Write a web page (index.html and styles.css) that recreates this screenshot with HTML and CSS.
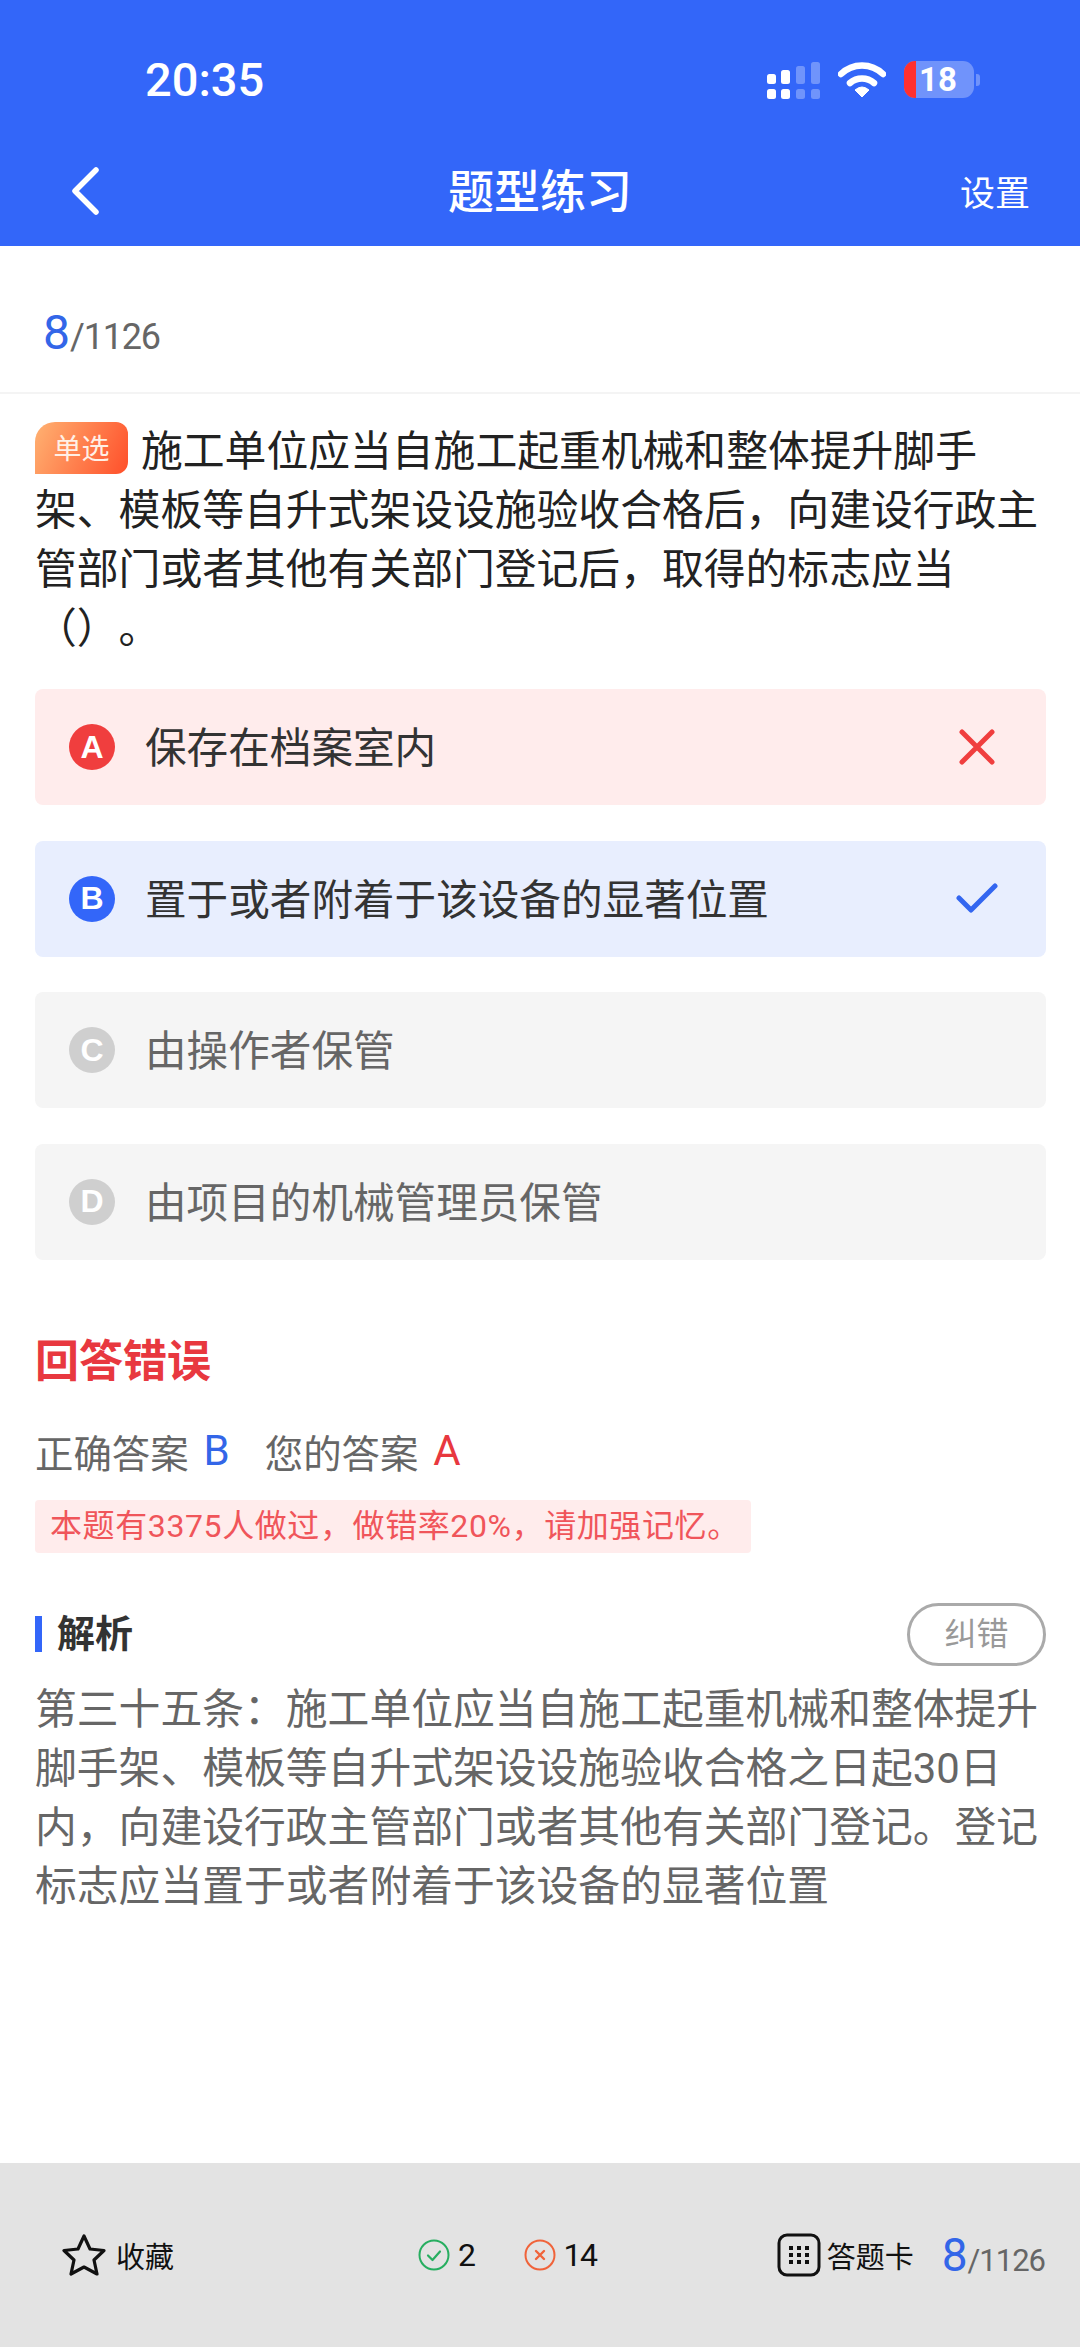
FILE: index.html
```html
<!DOCTYPE html>
<html lang="zh-CN">

<head>
    <meta charset="UTF-8">
    <meta name="viewport" content="width=device-width, initial-scale=1.0">
    <title>题型练习</title>
    <link rel="stylesheet" href="styles.css">
</head>

<body>
    <div class="page">
        <header class="top">
            <div class="status">
                <span class="time">20:35</span>
                <div class="status-icons">
                    <svg class="signal" width="54" height="38" viewBox="0 0 54 38">
                        <rect x="1" y="13" width="9" height="10" rx="2.5" fill="#fff"/>
                        <rect x="15" y="9" width="9" height="14" rx="2.5" fill="#fff"/>
                        <rect x="30" y="5" width="9" height="18" rx="2.5" fill="#fff" opacity=".3"/>
                        <rect x="45" y="1" width="9" height="22" rx="2.5" fill="#fff" opacity=".3"/>
                        <rect x="1" y="28" width="9" height="10" rx="2.5" fill="#fff"/>
                        <rect x="15" y="28" width="9" height="10" rx="2.5" fill="#fff"/>
                        <rect x="30" y="28" width="9" height="10" rx="2.5" fill="#fff" opacity=".3"/>
                        <rect x="45" y="28" width="9" height="10" rx="2.5" fill="#fff" opacity=".3"/>
                    </svg>
                    <svg class="wifi" width="48" height="36" viewBox="0 0 48 36">
                        <path d="M3 12 A30 30 0 0 1 45 12" fill="none" stroke="#fff" stroke-width="6.5" stroke-linecap="round"/>
                        <path d="M12 21 A18 18 0 0 1 36 21" fill="none" stroke="#fff" stroke-width="6.5" stroke-linecap="round"/>
                        <path d="M17 28 Q24 22 31 28 L24 35 Z" fill="#fff" stroke="#fff" stroke-linejoin="round"/>
                    </svg>
                    <div class="battery">
                        <div class="battery-body">
                            <span class="battery-low"></span>
                            <span class="battery-num">18</span>
                        </div>
                        <span class="battery-nub"></span>
                    </div>
                </div>
            </div>
            <nav class="nav">
                <svg class="back" width="32" height="50" viewBox="0 0 32 50">
                    <path d="M24 3 L3 24 L24 45" fill="none" stroke="#fff" stroke-width="5.5" stroke-linecap="round" stroke-linejoin="round"/>
                </svg>
                <h1 class="nav-title">题型练习</h1>
                <span class="nav-right">设置</span>
            </nav>
        </header>

        <div class="progress">
            <span class="cur">8</span><span class="total">/1126</span>
        </div>

        <main class="content">
            <p class="stem"><span class="tag">单选</span>施工单位应当自施工起重机械和整体提升脚手架、模板等自升式架设设施验收合格后，向建设行政主管部门或者其他有关部门登记后，取得的标志应当（）。</p>

            <ul class="options">
                <li class="option wrong">
                    <span class="letter">A</span>
                    <span class="option-text">保存在档案室内</span>
                    <svg class="mark" width="36" height="36" viewBox="0 0 36 36">
                        <path d="M3 3 L33 33 M33 3 L3 33" fill="none" stroke="#f03e3e" stroke-width="5" stroke-linecap="round"/>
                    </svg>
                </li>
                <li class="option right">
                    <span class="letter">B</span>
                    <span class="option-text">置于或者附着于该设备的显著位置</span>
                    <svg class="mark" width="42" height="32" viewBox="0 0 42 32">
                        <path d="M3 15 L15 27 L39 3" fill="none" stroke="#3366f0" stroke-width="5" stroke-linecap="round" stroke-linejoin="round"/>
                    </svg>
                </li>
                <li class="option">
                    <span class="letter">C</span>
                    <span class="option-text">由操作者保管</span>
                </li>
                <li class="option">
                    <span class="letter">D</span>
                    <span class="option-text">由项目的机械管理员保管</span>
                </li>
            </ul>

            <h2 class="result">回答错误</h2>
            <div class="answers">
                <span>正确答案</span><b class="ans-b">B</b>
                <span class="your">您的答案</span><b class="ans-a">A</b>
            </div>
            <div class="notice">本题有3375人做过，做错率20%，请加强记忆。</div>

            <div class="analysis-head">
                <h3 class="analysis-title">解析</h3>
                <span class="report">纠错</span>
            </div>
            <p class="analysis">第三十五条：施工单位应当自施工起重机械和整体提升脚手架、模板等自升式架设设施验收合格之日起30日内，向建设行政主管部门或者其他有关部门登记。登记标志应当置于或者附着于该设备的显著位置</p>
        </main>

        <footer class="bottom">
            <div class="fav">
                <svg width="44" height="44" viewBox="0 0 44 44">
                    <path d="M22 3 L28 16 L42 17.5 L32 27 L35 41 L22 34 L9 41 L12 27 L2 17.5 L16 16 Z" fill="none" stroke="#111" stroke-width="3.2" stroke-linejoin="round"/>
                </svg>
                <span>收藏</span>
            </div>
            <div class="counts">
                <div class="count">
                    <svg width="32" height="32" viewBox="0 0 32 32">
                        <circle cx="16" cy="16" r="14.5" fill="none" stroke="#27ae60" stroke-width="2"/>
                        <path d="M10 16.5 L14.5 21 L22 12.5" fill="none" stroke="#27ae60" stroke-width="2.2" stroke-linecap="round" stroke-linejoin="round"/>
                    </svg>
                    <span>2</span>
                </div>
                <div class="count">
                    <svg width="32" height="32" viewBox="0 0 32 32">
                        <circle cx="16" cy="16" r="14.5" fill="none" stroke="#f0633a" stroke-width="2"/>
                        <path d="M12 12 L20 20 M20 12 L12 20" fill="none" stroke="#f0633a" stroke-width="2.4" stroke-linecap="round"/>
                    </svg>
                    <span>14</span>
                </div>
            </div>
            <div class="card-link">
                <svg width="44" height="44" viewBox="0 0 44 44">
                    <rect x="2" y="2" width="40" height="40" rx="8" fill="none" stroke="#111" stroke-width="3"/>
                    <g fill="#111">
                        <rect x="12" y="13" width="4" height="4"/><rect x="20" y="13" width="4" height="4"/><rect x="28" y="13" width="4" height="4"/>
                        <rect x="12" y="20" width="4" height="4"/><rect x="20" y="20" width="4" height="4"/><rect x="28" y="20" width="4" height="4"/>
                        <rect x="12" y="27" width="4" height="4"/><rect x="20" y="27" width="4" height="4"/><rect x="28" y="27" width="4" height="4"/>
                    </g>
                </svg>
                <span>答题卡</span>
            </div>
            <div class="bottom-progress">
                <span class="cur">8</span><span class="total">/1126</span>
            </div>
        </footer>
    </div>
</body>

</html>
```

FILE: styles.css
```css
/* page */
* {
    box-sizing: border-box;
}

body {
    margin: 0;
    background: #fff;
    font-family: Roboto, "Noto Sans CJK SC", sans-serif;
    color: #333;
    text-spacing-trim: space-all;
}

.page {
    width: 1080px;
    height: 2347px;
    display: flex;
    flex-direction: column;
}

/* blue header */
.top {
    height: 246px;
    background: #3366f9;
    color: #fff;
    padding: 0 32px 0 72px;
    flex-shrink: 0;
}

.status {
    height: 146px;
    display: flex;
    align-items: center;
    justify-content: space-between;
    padding: 13px 68px 0 73px;
}

.time {
    font-size: 47px;
    font-weight: 500;
}

.status-icons {
    display: flex;
    align-items: center;
    gap: 18px;
}

.battery {
    display: flex;
    align-items: center;
    gap: 2px;
}

.battery-body {
    width: 70px;
    height: 37px;
    border-radius: 11px;
    background: #7093fb;
    display: flex;
    align-items: center;
    overflow: hidden;
}

.battery-low {
    width: 12px;
    height: 100%;
    background: #ff3030;
}

.battery-num {
    margin-left: 3px;
    font-size: 33px;
    font-weight: 700;
}

.battery-nub {
    width: 4px;
    height: 12px;
    border-radius: 0 3px 3px 0;
    background: #7093fb;
}

.nav {
    height: 100px;
    display: flex;
    align-items: center;
    justify-content: space-between;
    position: relative;
}

.back {
    margin-bottom: 8px;
}

.nav-title {
    margin: 0 0 16px 0;
    position: absolute;
    left: 0;
    right: 40px;
    text-align: center;
    font-size: 46px;
    font-weight: 500;
}

.nav-right {
    font-size: 35px;
    margin: 0 18px 12px 0;
}

/* progress */
.progress {
    height: 148px;
    padding: 58px 0 0 43px;
    border-bottom: 2px solid #f4f4f4;
    flex-shrink: 0;
}

.cur {
    color: #3366e8;
    font-size: 48px;
}

.total {
    color: #666;
    font-size: 36px;
    letter-spacing: -1.2px;
}

/* question */
.content {
    flex: 1;
    padding: 28px 34px 0 35px;
}

.stem {
    margin: 0;
    font-size: 41.8px;
    line-height: 59px;
    color: #222;
}

.tag {
    display: inline-block;
    width: 93px;
    height: 52px;
    line-height: 56px;
    margin-right: 13px;
    border-radius: 20px 12px 12px 0;
    background: linear-gradient(115deg, #ffb272, #ff4f2a);
    color: #fff0e6;
    font-size: 28px;
    text-align: center;
    vertical-align: 7px;
}

.options {
    list-style: none;
    margin: 31px 0 0;
    padding: 0;
    display: flex;
    flex-direction: column;
    gap: 35.5px;
}

.option {
    height: 116px;
    padding: 0 51px 0 34px;
    border-radius: 8px;
    background: #f5f5f5;
    display: flex;
    align-items: center;
    color: #666;
    font-size: 41.6px;
}

.option .letter {
    width: 46px;
    height: 46px;
    border-radius: 50%;
    background: #cfcfcf;
    color: #fff;
    font-family: "Liberation Sans", sans-serif;
    font-size: 32px;
    font-weight: 700;
    display: flex;
    align-items: center;
    justify-content: center;
    flex-shrink: 0;
}

.option-text {
    margin: 0 0 4px 30px;
    flex: 1;
}

.option.wrong {
    background: #ffecec;
    color: #333;
}

.option.wrong .letter {
    background: #f03e3e;
}

.option.right {
    background: #e8eefe;
    color: #333;
}

.option.right .letter {
    background: #3366f9;
}

.option.right .mark {
    margin-right: -3px;
}

/* result */
.result {
    margin: 72px 0 0;
    color: #e8383f;
    font-size: 44px;
    line-height: 60px;
    font-weight: 700;
}

.answers {
    margin-top: 34px;
    height: 50px;
    display: flex;
    align-items: center;
    font-size: 38.4px;
    color: #666;
}

.answers b {
    font-weight: 400;
    font-size: 42px;
    margin-left: 15px;
}

.ans-b {
    color: #3366e8;
}

.ans-a {
    color: #e8383f;
}

.your {
    margin-left: 35px;
}

.notice {
    margin-top: 24px;
    width: 716px;
    height: 53px;
    line-height: 53px;
    padding-left: 15px;
    border-radius: 4px;
    background: #ffecec;
    color: #f0555a;
    font-size: 32px;
    letter-spacing: .6px;
    white-space: nowrap;
}

.analysis-head {
    margin-top: 50px;
    height: 63px;
    display: flex;
    align-items: center;
    justify-content: space-between;
}

.analysis-title {
    margin: 0;
    height: 36px;
    line-height: 36px;
    padding-left: 15px;
    border-left: 7px solid #3366f9;
    font-size: 38px;
    font-weight: 700;
    color: #333;
}

.report {
    width: 139px;
    height: 63px;
    line-height: 57px;
    border: 3px solid #aaa;
    border-radius: 32px;
    text-align: center;
    color: #999;
    font-size: 32px;
}

.analysis {
    margin: 14px 0 0;
    font-size: 41.8px;
    line-height: 59px;
    color: #666;
}

/* bottom bar */
.bottom {
    height: 184px;
    flex-shrink: 0;
    background: #e3e3e3;
    display: flex;
    align-items: center;
    padding: 0 35px 0 62px;
    color: #111;
    font-size: 29px;
}

.fav,
.card-link,
.count {
    display: flex;
    align-items: center;
}

.fav span {
    margin-left: 10px;
}

.counts {
    margin-left: 244px;
    display: flex;
    gap: 49px;
    font-size: 32px;
    letter-spacing: -1.5px;
}

.count span {
    margin-left: 8px;
}

.card-link {
    margin-left: auto;
}

.card-link span {
    margin-left: 6px;
}

.bottom-progress {
    margin-left: 28px;
}

.bottom-progress .cur {
    font-size: 46px;
}

.bottom-progress .total {
    font-size: 31px;
    letter-spacing: -1px;
}
```
